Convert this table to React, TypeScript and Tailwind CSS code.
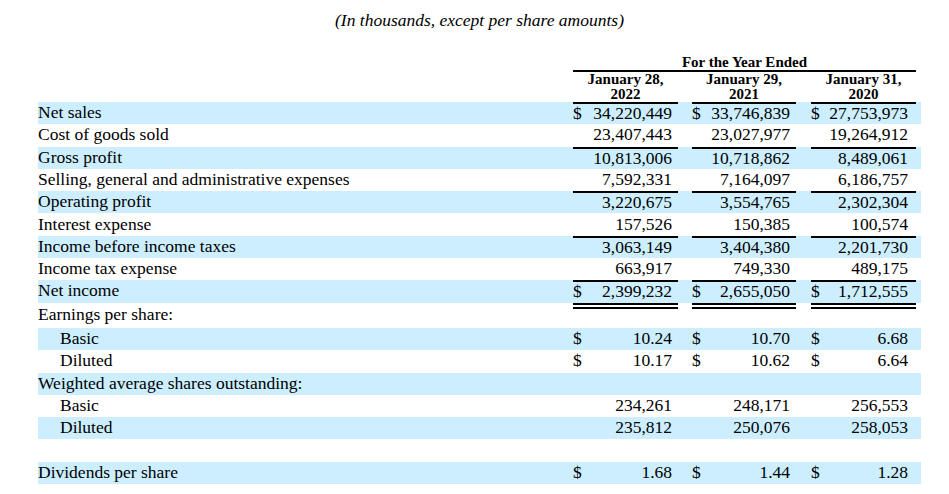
import React from 'react';

type Row = {
  label: string;
  values: string[];
  dollar?: boolean;
  indent?: boolean;
  lineAbove?: boolean;
  doubleBelow?: boolean;
  h: string;
};

const TOP = 'h-[22.3px]';
const BOT = 'h-[22.25px]';

const ROWS: Row[] = [
  { label: 'Net sales', values: ['34,220,449', '33,746,839', '27,753,973'], dollar: true, lineAbove: true, h: TOP },
  { label: 'Cost of goods sold', values: ['23,407,443', '23,027,977', '19,264,912'], h: TOP },
  { label: 'Gross profit', values: ['10,813,006', '10,718,862', '8,489,061'], lineAbove: true, h: TOP },
  { label: 'Selling, general and administrative expenses', values: ['7,592,331', '7,164,097', '6,186,757'], h: TOP },
  { label: 'Operating profit', values: ['3,220,675', '3,554,765', '2,302,304'], lineAbove: true, h: TOP },
  { label: 'Interest expense', values: ['157,526', '150,385', '100,574'], h: TOP },
  { label: 'Income before income taxes', values: ['3,063,149', '3,404,380', '2,201,730'], lineAbove: true, h: TOP },
  { label: 'Income tax expense', values: ['663,917', '749,330', '489,175'], h: TOP },
  { label: 'Net income', values: ['2,399,232', '2,655,050', '1,712,555'], dollar: true, lineAbove: true, doubleBelow: true, h: TOP },
  { label: 'Earnings per share:', values: ['', '', ''], h: 'h-[25.5px]' },
  { label: 'Basic', values: ['10.24', '10.70', '6.68'], dollar: true, indent: true, h: BOT },
  { label: 'Diluted', values: ['10.17', '10.62', '6.64'], dollar: true, indent: true, h: BOT },
  { label: 'Weighted average shares outstanding:', values: ['', '', ''], h: BOT },
  { label: 'Basic', values: ['234,261', '248,171', '256,553'], indent: true, h: BOT },
  { label: 'Diluted', values: ['235,812', '250,076', '258,053'], indent: true, h: BOT },
  { label: '', values: ['', '', ''], h: BOT },
  { label: 'Dividends per share', values: ['1.68', '1.44', '1.28'], dollar: true, h: BOT },
];

// column widths and gaps, measured off the filing
const COLS = [
  { w: 'w-[105px]', ml: 'ml-0', pr: 'pr-[6px]' },
  { w: 'w-[104px]', ml: 'ml-[14px]', pr: 'pr-[6px]' },
  { w: 'w-[105px]', ml: 'ml-[15px]', pr: 'pr-[8px]' },
];

const HEADS = [
  ['January 28,', '2022'],
  ['January 29,', '2021'],
  ['January 31,', '2020'],
];

export default function App() {
  return (
    <div className="min-h-screen bg-white text-black font-['Liberation_Serif','Times_New_Roman',serif]">
      <div className="ml-[38px] w-[883px]">
        <div className="pt-[10px] text-center text-[17.5px] leading-[20px] italic">
          (In thousands, except per share amounts)
        </div>

        {/* column header */}
        <div className="mt-[24.7px] flex font-bold text-[15px] leading-[15px]">
          <div className="w-[535px]" />
          <div className="w-[343px]">
            <div className="border-b-2 border-black text-center">For the Year Ended</div>
            <div className="flex">
              {HEADS.map((h, i) => (
                <div key={i} className={`${COLS[i].w} ${COLS[i].ml} text-center`}>
                  <div>{h[0]}</div>
                  <div>{h[1]}</div>
                </div>
              ))}
            </div>
          </div>
        </div>

        {/* body */}
        <div className="mt-[0.3px] text-[17.5px]">
          {ROWS.map((r, ri) => (
            <div key={ri} className={`flex ${r.h} ${ri % 2 === 0 ? 'bg-[#cceeff]' : 'bg-white'}`}>
              <div className={`w-[535px] pb-[2px] flex items-center whitespace-nowrap ${r.indent ? 'pl-[22px]' : ''}`}>
                {r.label}
              </div>
              {r.values.map((v, ci) => (
                <div
                  key={ci}
                  className={`relative ${COLS[ci].w} ${COLS[ci].ml} ${COLS[ci].pr} pb-[2px] flex items-center justify-between ${
                    r.lineAbove ? 'border-t-2 border-black' : ''
                  }`}
                >
                  <span>{r.dollar ? '$' : ''}</span>
                  <span>{v}</span>
                  {r.doubleBelow && (
                    <div className="absolute left-0 right-0 -bottom-[6px] h-[6px] border-y-2 border-black" />
                  )}
                </div>
              ))}
            </div>
          ))}
        </div>
      </div>
    </div>
  );
}
